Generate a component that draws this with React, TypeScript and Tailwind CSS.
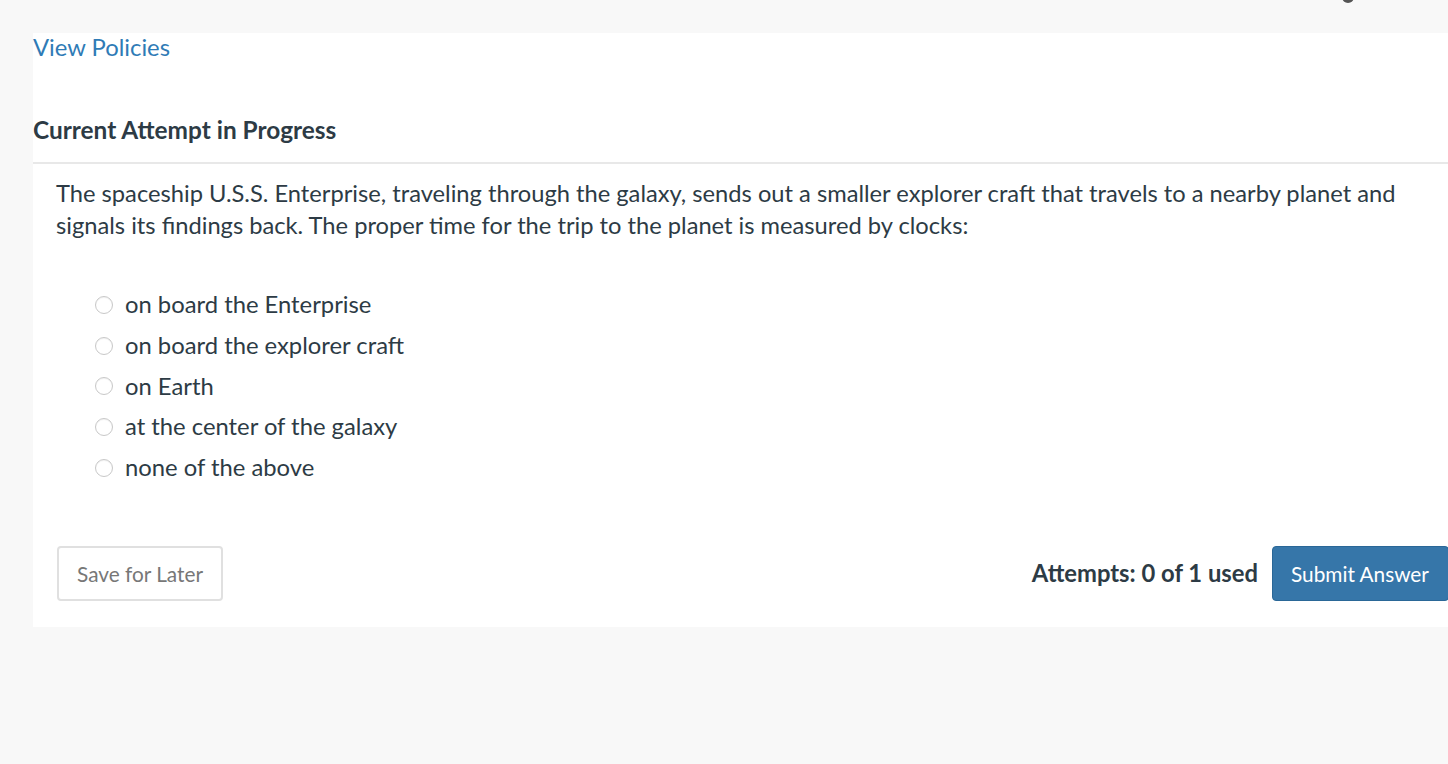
import React from "react";

const options = [
  "on board the Enterprise",
  "on board the explorer craft",
  "on Earth",
  "at the center of the galaxy",
  "none of the above",
];

export default function App() {
  return (
    <div
      className="w-[1448px] h-[764px] overflow-hidden bg-[#f8f8f8] relative"
      style={{ fontFamily: "Lato, 'Open Sans', sans-serif" }}
    >
      <div className="absolute left-[1342px] top-[-9px] w-[12px] h-[12px] rounded-full bg-[#555]" />
      <div className="h-[33px]" />
      <div className="ml-[33px] w-[1440px] bg-white pb-[26px]">
        <div className="h-[30px] flex items-center text-[23.8px] text-[#2f7bb6] leading-none">
          View Policies
        </div>
        <div className="h-[50px]" />
        <div className="h-[34px] flex items-center text-[24.4px] font-bold text-[#2d3b45]">
          Current Attempt in Progress
        </div>
        <div className="h-[15px]" />
        <div className="h-[2px] bg-[#e8e8e8]" />
        <div className="px-[23px] pt-[13px] text-[23.7px] leading-[32px] text-[#2d3b45] w-[1400px]">
          The spaceship U.S.S. Enterprise, traveling through the galaxy, sends out a smaller explorer craft that travels to a nearby planet and signals its findings back. The proper time for the trip to the planet is measured by clocks:
        </div>
        <div className="pt-[44px] pl-[62px] flex flex-col">
          {options.map((o) => (
            <label key={o} className="h-[40.6px] flex items-center text-[23.8px] text-[#2d3b45]">
              <span className="w-[18px] h-[18px] rounded-full border border-[#c8c8c8] bg-white shadow-[inset_0_1px_1px_rgba(0,0,0,0.06)]" />
              <span className="ml-[12px]">{o}</span>
            </label>
          ))}
        </div>
        <div className="mt-[58px] px-[24px] flex items-center">
          <button className="h-[55px] px-[18px] rounded-[4px] border-2 border-[#e0e0e0] text-[20.8px] text-[#777] bg-white">
            Save for Later
          </button>
          <div className="flex-1" />
          <div className="text-[23.8px] font-bold text-[#2d3b45] mr-[14px]">
            Attempts: 0 of 1 used
          </div>
          <button className="h-[55px] pl-[18px] rounded-[4px] border border-[#2a6797] bg-[#3676a9] text-white text-[20.8px] w-[177px] text-left whitespace-nowrap">
            Submit Answer
          </button>
        </div>
      </div>
    </div>
  );
}
